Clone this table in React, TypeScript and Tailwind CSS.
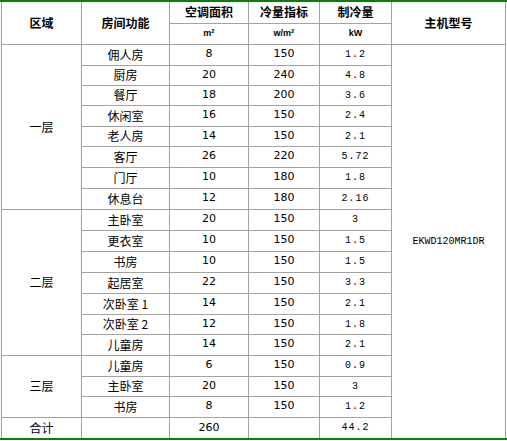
import React from "react";

type Room = { name: string; area: string; index: string; cool: string; h: number };

const floors: { label: string; rooms: Room[] }[] = [
  {
    label: "一层",
    rooms: [
      { name: "佣人房", area: "8", index: "150", cool: "1.2", h: 21 },
      { name: "厨房", area: "20", index: "240", cool: "4.8", h: 20 },
      { name: "餐厅", area: "18", index: "200", cool: "3.6", h: 20 },
      { name: "休闲室", area: "16", index: "150", cool: "2.4", h: 21 },
      { name: "老人房", area: "14", index: "150", cool: "2.1", h: 20 },
      { name: "客厅", area: "26", index: "220", cool: "5.72", h: 21 },
      { name: "门厅", area: "10", index: "180", cool: "1.8", h: 21 },
      { name: "休息台", area: "12", index: "180", cool: "2.16", h: 21 },
    ],
  },
  {
    label: "二层",
    rooms: [
      { name: "主卧室", area: "20", index: "150", cool: "3", h: 21 },
      { name: "更衣室", area: "10", index: "150", cool: "1.5", h: 21 },
      { name: "书房", area: "10", index: "150", cool: "1.5", h: 21 },
      { name: "起居室", area: "22", index: "150", cool: "3.3", h: 21 },
      { name: "次卧室 1", area: "14", index: "150", cool: "2.1", h: 21 },
      { name: "次卧室 2", area: "12", index: "150", cool: "1.8", h: 20 },
      { name: "儿童房", area: "14", index: "150", cool: "2.1", h: 21 },
    ],
  },
  {
    label: "三层",
    rooms: [
      { name: "儿童房", area: "6", index: "150", cool: "0.9", h: 21 },
      { name: "主卧室", area: "20", index: "150", cool: "3", h: 20 },
      { name: "书房", area: "8", index: "150", cool: "1.2", h: 21 },
    ],
  },
];

const cell = "border border-[#a3a3a3] text-center align-middle p-0";
const cjk = "font-['Noto_Sans_CJK_SC',sans-serif] text-[12px]";
const num = "font-['DejaVu_Sans',sans-serif] text-[11px]";
const mono = "font-['Liberation_Mono','Noto_Sans_CJK_SC',monospace] text-[10px]";

export default function App() {
  const total = floors.reduce((n, f) => n + f.rooms.length, 0);
  return (
    <div className="w-[507px] bg-white border-t-2 border-b-2 border-[#0a7d0a] text-black">
      <table className="ml-[1px] w-[505px] border-collapse table-fixed">
        <colgroup>
          <col className="w-[80px]" />
          <col className="w-[88px]" />
          <col className="w-[79px]" />
          <col className="w-[71px]" />
          <col className="w-[72px]" />
          <col className="w-[114px]" />
        </colgroup>
        <tbody>
          <tr className="h-[21px]">
            <td rowSpan={2} className={`${cell} ${cjk} font-bold border-t-0`}>区域</td>
            <td rowSpan={2} className={`${cell} ${cjk} font-bold border-t-0`}>房间功能</td>
            <td className={`${cell} ${cjk} font-bold border-t-0`}>空调面积</td>
            <td className={`${cell} ${cjk} font-bold border-t-0`}>冷量指标</td>
            <td className={`${cell} ${cjk} font-bold border-t-0`}>制冷量</td>
            <td rowSpan={2} className={`${cell} ${cjk} font-bold border-t-0`}>主机型号</td>
          </tr>
          <tr className="h-[21px]">
            <td className={`${cell} font-['Liberation_Sans',sans-serif] text-[9px] font-bold`}>
              m<sup className="text-[6px]">2</sup>
            </td>
            <td className={`${cell} font-['Liberation_Sans',sans-serif] text-[9px] font-bold`}>
              w/m<sup className="text-[6px]">2</sup>
            </td>
            <td className={`${cell} font-['Liberation_Sans',sans-serif] text-[9px] font-bold`}>kW</td>
          </tr>
          {floors.map((f, fi) =>
            f.rooms.map((r, ri) => (
              <tr key={`${fi}-${ri}`} style={{ height: r.h }}>
                {ri === 0 && (
                  <td rowSpan={f.rooms.length} className={`${cell} ${cjk}`}>
                    {f.label}
                  </td>
                )}
                <td className={`${cell} ${cjk}`}>{r.name}</td>
                <td className={`${cell} ${num}`}>{r.area}</td>
                <td className={`${cell} ${num}`}>{r.index}</td>
                <td className={`${cell} ${mono} tracking-[1px]`}>{r.cool}</td>
                {fi === 0 && ri === 0 && (
                  <td rowSpan={total + 1} className={`${cell} ${mono} border-b-0`}>
                    EKWD120MR1DR
                  </td>
                )}
              </tr>
            ))
          )}
          <tr className="h-[21px]">
            <td className={`${cell} ${cjk} border-b-0`}>合计</td>
            <td className={`${cell} border-b-0`}></td>
            <td className={`${cell} ${num} border-b-0`}>260</td>
            <td className={`${cell} border-b-0`}></td>
            <td className={`${cell} ${mono} tracking-[1px] border-b-0`}>44.2</td>
          </tr>
        </tbody>
      </table>
    </div>
  );
}
